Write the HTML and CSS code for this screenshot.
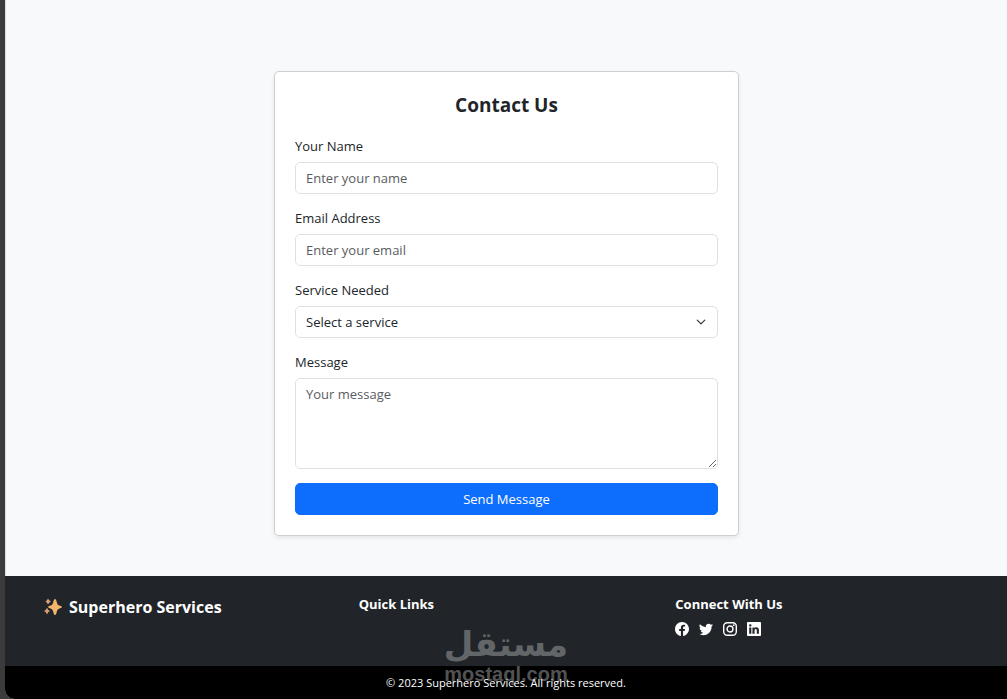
FILE: index.html
```html
<!DOCTYPE html>
<html lang="en">
<head>
  <meta charset="UTF-8" />
  <meta name="viewport" content="width=device-width, initial-scale=1.0"/>
  <title>Superhero Services</title>
  <link rel="stylesheet" href="styles.css">
</head>
<body>

<div class="page">
  <main class="contact">
    <div class="card">
      <h2>Contact Us</h2>
      <form id="contact-form">
        <div class="field">
          <label for="name">Your Name</label>
          <input type="text" id="name" placeholder="Enter your name" />
        </div>
        <div class="field">
          <label for="email">Email Address</label>
          <input type="email" id="email" placeholder="Enter your email" />
        </div>
        <div class="field">
          <label for="service">Service Needed</label>
          <div class="select-wrap">
            <select id="service">
              <option>Select a service</option>
            </select>
            <svg class="chevron" viewBox="0 0 16 16"><path d="m2 5 6 6 6-6"/></svg>
          </div>
        </div>
        <div class="field">
          <label for="message">Message</label>
          <textarea id="message" placeholder="Your message"></textarea>
        </div>
        <button type="submit">Send Message</button>
      </form>
    </div>
  </main>

  <footer>
    <div class="footer-cols">
      <div>
        <h5 class="brand">
          <svg viewBox="0 0 18 18"><path d="M11 1Q12.200 1 12.800 4.500Q13.300 7 15.500 7.600Q18 8.200 18 9Q18 9.800 15.500 10.400Q13.300 11 12.800 13.500Q12.200 17 11 17Q9.800 17 9.200 13.500Q8.700 11 6.500 10.400Q4 9.800 4 9Q4 8.200 6.500 7.600Q8.700 7 9.200 4.500Q9.800 1 11 1Z"/><path class="small" d="M4 .500Q4.800 2.700 7 3.500Q4.800 4.300 4 6.500Q3.200 4.300 1.500 3.500Q3.200 2.700 4 .500Z"/><path class="small" d="M3 9.800Q3.800 12.200 6 13Q3.800 13.800 3 16.500Q2.200 13.800 0 13Q2.200 12.200 3 9.800Z"/></svg>
          Superhero Services
        </h5>
      </div>
      <div>
        <h6>Quick Links</h6>
      </div>
      <div>
        <h6>Connect With Us</h6>
        <div class="social">
          <a href="#" aria-label="Facebook"><svg viewBox="0 0 16 16"><path d="M16 8.049c0-4.446-3.582-8.050-8-8.050C3.580 0-.002 3.603-.002 8.050c0 4.017 2.926 7.347 6.750 7.951v-5.625h-2.030V8.050H6.750V6.275c0-2.017 1.195-3.131 3.022-3.131.876 0 1.791.157 1.791.157v1.980h-1.009c-.993 0-1.303.621-1.303 1.258v1.510h2.218l-.354 2.326H9.250V16c3.824-.604 6.750-3.934 6.750-7.951"/></svg></a>
          <a href="#" aria-label="Twitter"><svg viewBox="0 0 16 16"><path d="M5.026 15c6.038 0 9.341-5.003 9.341-9.334q.002-.211-.006-.422A6.700 6.700 0 0 0 16 3.542a6.700 6.700 0 0 1-1.889.518 3.300 3.300 0 0 0 1.447-1.817 6.500 6.500 0 0 1-2.087.793A3.286 3.286 0 0 0 7.875 6.030a9.320 9.320 0 0 1-6.767-3.429 3.290 3.290 0 0 0 1.018 4.382A3.300 3.300 0 0 1 .640 6.575v.045a3.290 3.290 0 0 0 2.632 3.218 3.200 3.200 0 0 1-.865.115 3 3 0 0 1-.614-.057 3.280 3.280 0 0 0 3.067 2.277A6.600 6.600 0 0 1 .780 13.580a6 6 0 0 1-.780-.045A9.340 9.340 0 0 0 5.026 15"/></svg></a>
          <a href="#" aria-label="Instagram"><svg viewBox="0 0 16 16"><g class="outline"><rect x=".8" y=".8" width="14.4" height="14.4" rx="4"/><circle cx="8" cy="8" r="3.400"/></g><circle cx="12.300" cy="3.700" r="1"/></svg></a>
          <a href="#" aria-label="LinkedIn"><svg viewBox="0 0 16 16"><path fill-rule="evenodd" d="M0 1.146C0 .513.526 0 1.175 0h13.650C15.474 0 16 .513 16 1.146v13.708c0 .633-.526 1.146-1.175 1.146H1.175C.526 16 0 15.487 0 14.854zm4.943 12.248V6.169H2.542v7.225zm-1.200-8.212c.837 0 1.358-.554 1.358-1.248-.015-.709-.520-1.248-1.342-1.248S2.400 3.226 2.400 3.934c0 .694.521 1.248 1.327 1.248zm4.908 8.212V9.359c0-.216.016-.432.080-.586.173-.431.568-.878 1.232-.878.869 0 1.216.662 1.216 1.634v3.865h2.401V9.250c0-2.220-1.184-3.252-2.764-3.252-1.274 0-1.845.700-2.165 1.193v.025h-.016l.016-.025V6.169h-2.400c.030.678 0 7.225 0 7.225z"/></svg></a>
        </div>
      </div>
    </div>
    <p class="copyright"><span>&copy; 2023 Superhero Services. All rights reserved.</span></p>
    <div class="watermark">
      <span class="watermark-ar" lang="ar">مستقل</span>
      <span class="watermark-en">mostaql.com</span>
    </div>
  </footer>
</div>

</body>
</html>
```
FILE: styles.css
```css
* { box-sizing: border-box; }
body {
  margin: 0;
  padding-left: 5px;
  background: #3b3b3b;
  color: #212529;
  font-family: "Open Sans", "Noto Sans", sans-serif;
  font-size: 13px;
  line-height: 20px;
}
.page {
  display: flex;
  flex-direction: column;
  min-height: 100vh;
  background: #f8f9fa;
  border-bottom-left-radius: 10px;
  overflow: hidden;
}
.contact { flex: 1; padding: 71px 20px 40px; border-left: 1px solid #dcdddd; }

/* contact card */
.card {
  max-width: 465px;
  margin: 0 auto;
  padding: 20px;
  background: #fff;
  border: 1px solid #cdd0d2;
  border-radius: 5px;
  box-shadow: 0 2px 4px rgba(0, 0, 0, 0.08);
}
.card h2 { margin: 0 0 18px; font-size: 19px; line-height: 26px; text-align: center; }
.field { margin-bottom: 14px; }
.field label { display: block; margin-bottom: 6px; }
input, select, textarea, button {
  display: block;
  width: 100%;
  height: 32px;
  padding: 5px 10px;
  border: 1px solid #dee2e6;
  border-radius: 5px;
  background: #fff;
  color: #212529;
  font: inherit;
}
::placeholder { color: #595c5f; opacity: 1; }
select { appearance: none; }
textarea { height: 91px; resize: vertical; }
button { background: #0d6efd; border-color: #0d6efd; color: #fff; cursor: pointer; }
button:hover { background: #0b5ed7; }
.select-wrap { position: relative; }
.chevron {
  position: absolute;
  top: 11px;
  right: 12px;
  width: 10px;
  height: 10px;
  fill: none;
  stroke: #343a40;
  stroke-width: 2;
  stroke-linecap: round;
  stroke-linejoin: round;
  pointer-events: none;
}

/* footer */
footer { position: relative; background: #212529; color: #fff; }
.footer-cols {
  display: grid;
  grid-template-columns: repeat(3, 1fr);
  gap: 22px;
  min-height: 90px;
  padding: 18px 37px;
}
h5, h6 { margin: 0; }
h6 { font-size: 13px; line-height: 20px; }
.brand { display: flex; align-items: center; gap: 7px; padding-left: 2px; font-size: 16px; line-height: 26px; }
.brand svg { width: 18px; height: 18px; fill: #f3b56b; }
.brand .small { fill: #dba078; }
.social { display: flex; gap: 10px; margin-top: 8px; }
.social a { display: block; height: 14px; }
.social svg { display: block; width: 14px; height: 14px; fill: #fff; }
.outline { fill: none; stroke: #fff; stroke-width: 1.6; }
.copyright { margin: 0; padding: 7px 0 6px; background: #000; font-size: 11px; text-align: center; }
.copyright span { position: relative; z-index: 2; }

/* watermark over the footer */
.watermark {
  position: absolute;
  top: 49px;
  left: 0;
  right: 0;
  display: flex;
  flex-direction: column;
  align-items: center;
  color: #b4b6b8;
  opacity: 0.45;
  font-weight: bold;
  pointer-events: none;
}
.watermark-ar { font-family: "DejaVu Sans", sans-serif; font-size: 34px; line-height: 38px; }
.watermark-en { font-family: "Liberation Sans", sans-serif; font-size: 20px; line-height: 22px; }
```
